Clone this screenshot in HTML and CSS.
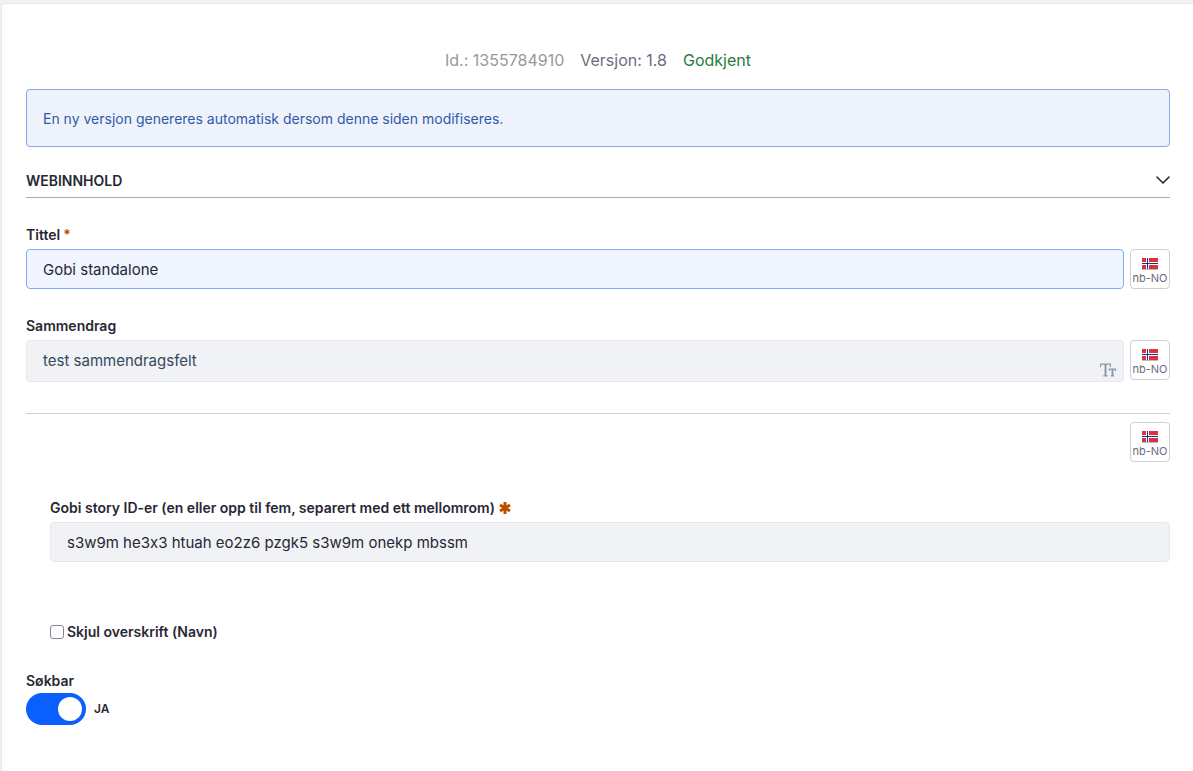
FILE: index.html
```html
<!DOCTYPE html>
<html lang="nb">
<head>
    <title>Webinnhold</title>
    <meta charset="utf-8" />
    <meta name="viewport" content="width=device-width, initial-scale=1" />

    <link rel="stylesheet" href="styles.css">

</head>
<body>

    <!-- Norwegian flag, used by all the language buttons -->
    <svg class="symbols" width="0" height="0" aria-hidden="true">
        <symbol id="flag-no" viewBox="0 0 16 12">
            <rect width="16" height="12" fill="#fff" />
            <path fill="#e03038" d="M0 0h4v4H0zM7 0h9v4H7zM0 7h4v4H0zM7 7h9v4H7z" />
            <path fill="#10359c" d="M5 0h1v11H5zM0 5h16v1H0z" />
            <path fill="#b9b9c4" d="M0 11h16v1H0z" />
        </symbol>
    </svg>

    <form class="sheet">

        <div class="meta">
            <span class="meta_id">Id.: 1355784910</span>
            <span class="meta_version">Versjon: 1.8</span>
            <span class="meta_status">Godkjent</span>
        </div>

        <div class="alert">En ny versjon genereres automatisk dersom denne siden modifiseres.</div>

        <button type="button" class="panel_header">
            <span>WEBINNHOLD</span>
            <svg class="chevron" viewBox="0 0 14 10"><path d="M1 1l6 6 6-6" /></svg>
        </button>

        <div class="field">
            <label for="title">Tittel<span class="required">*</span></label>
            <div class="field_row">
                <input type="text" id="title" class="input input_active" value="Gobi standalone" />
                <button type="button" class="lang"><svg class="flag"><use href="#flag-no" /></svg>nb-NO</button>
            </div>
        </div>

        <div class="field">
            <label for="summary">Sammendrag</label>
            <div class="field_row">
                <div class="editor">
                    <textarea id="summary" class="input input_summary" rows="1">test sammendragsfelt</textarea>
                    <svg class="text_icon" viewBox="0 0 16 14">
                        <path d="M.6 4V1.200h9.800V4M3.300 12.900h4.400" />
                        <path class="stem" d="M5.500 1v12M12.500 6v7" />
                        <path d="M9.400 7.900V6.200h6V7.900M10.900 12.900h3.200" />
                    </svg>
                </div>
                <button type="button" class="lang"><svg class="flag"><use href="#flag-no" /></svg>nb-NO</button>
            </div>
        </div>

        <div class="structure">
            <button type="button" class="lang"><svg class="flag"><use href="#flag-no" /></svg>nb-NO</button>
        </div>

        <div class="nested">
            <div class="field">
                <label for="stories">Gobi story ID-er (en eller opp til fem, separert med ett mellomrom)
                    <svg class="asterisk" viewBox="0 0 12 12"><path d="M6 0v12M1 3l10 6M11 3L1 9" /></svg>
                </label>
                <input type="text" id="stories" class="input" value="s3w9m he3x3 htuah eo2z6 pzgk5 s3w9m onekp mbssm" />
            </div>

            <div class="check">
                <input type="checkbox" id="hide-title" class="checkbox" />
                <label for="hide-title">Skjul overskrift (Navn)</label>
            </div>
        </div>

        <div class="searchable">
            <label for="searchable">Søkbar</label>
            <div class="toggle_row">
                <input type="checkbox" id="searchable" class="toggle" checked />
                <span>JA</span>
            </div>
        </div>

    </form>

</body>
</html>
```

FILE: styles.css
```css
* {
    box-sizing: border-box;
}

body {
    margin: 0;
    padding: 3px 0 0 1px;
    background: #f1f2f5;
    color: #272833;
    font-family: Inter, "Liberation Sans", sans-serif;
    font-size: 16px;
    line-height: 24px;
    font-variant-ligatures: no-contextual;
}

button,
input,
textarea {
    margin: 0;
    font-family: inherit;
    font-variant-ligatures: inherit;
    color: inherit;
}

label {
    display: block;
    font-size: 14px;
    font-weight: 600;
    line-height: 20px;
}

.symbols {
    position: absolute;
}

.sheet {
    min-height: calc(100vh - 3px);
    padding: 44px 23px 46px 24px;
    border: 1px solid #e7e7ed;
    border-width: 1px 0 0 1px;
    border-radius: 4px 0 0 0;
    background: #fff;
}

.meta {
    display: flex;
    justify-content: center;
    gap: 16px;
    margin-bottom: 17px;
}

.meta_id {
    color: #999;
}

.meta_version {
    color: #6b6c7e;
}

.meta_status {
    color: #287d3c;
}

.alert {
    padding: 19px 16px 17px;
    border: 1px solid #89a7e0;
    border-radius: 4px;
    background: #eef2fa;
    color: #2e5aac;
    font-size: 14px;
    line-height: 20px;
}

/* section header */
.panel_header {
    display: flex;
    justify-content: space-between;
    align-items: center;
    width: 100%;
    margin: 24px 0 27px;
    padding: 0 0 6px;
    border: 0;
    border-bottom: 1px solid #a7a9bc;
    background: none;
    font-size: 14px;
    font-weight: 600;
    line-height: 20px;
}

.chevron {
    width: 14px;
    height: 10px;
    overflow: visible;
    fill: none;
    stroke: #272833;
    stroke-width: 1.600;
    stroke-linecap: round;
    stroke-linejoin: round;
}

/* fields */
.field {
    margin-bottom: 27px;
}

.field label {
    margin-bottom: 4px;
}

.field_row {
    display: flex;
    align-items: flex-start;
    gap: 6px;
}

.input {
    display: block;
    flex: 1;
    width: 100%;
    height: 40px;
    padding: 7px 16px;
    border: 1px solid #e7e7ed;
    border-radius: 4px;
    background: #f1f2f5;
    font-size: 15px;
    line-height: 24px;
}

.input_active {
    border-color: #80acff;
    background: #f0f5ff;
}

.editor {
    position: relative;
    flex: 1;
}

.input_summary {
    height: 42px;
    padding: 8px 16px;
    overflow: hidden;
    resize: none;
    color: #34495e;
}

.text_icon {
    position: absolute;
    right: 8px;
    bottom: 5px;
    width: 16px;
    height: 14px;
    fill: none;
    stroke: #869cad;
    stroke-width: 1.200;
}

.stem {
    stroke-width: 2;
}

.required {
    margin-left: 3px;
    color: #b95000;
}

.asterisk {
    width: 12px;
    height: 12px;
    margin-left: 1px;
    vertical-align: -1px;
    stroke: #b95000;
    stroke-width: 3;
}

.lang {
    display: flex;
    flex-direction: column;
    align-items: center;
    width: 40px;
    height: 40px;
    padding: 8px 0 0;
    border: 1px solid #cdced9;
    border-radius: 4px;
    background: #fff;
    color: #6b6c7e;
    font-size: 11px;
    line-height: 16px;
}

.flag {
    flex: none;
    width: 16px;
    height: 12px;
}

.structure {
    display: flex;
    justify-content: flex-end;
    margin-top: 31px;
    padding-top: 8px;
    border-top: 1px solid #cdced9;
}

.nested {
    padding: 36px 0 0 24px;
}

.check {
    display: flex;
    align-items: center;
    gap: 3px;
    margin-top: 60px;
}

.checkbox {
    appearance: none;
    width: 14px;
    height: 14px;
    border: 1px solid #85869a;
    border-radius: 3px;
    background: #fff;
}

.checkbox:checked {
    background: #0b5fff;
}

/* searchable switch */
.searchable {
    margin-top: 29px;
}

.toggle_row {
    display: flex;
    align-items: center;
    gap: 8px;
    margin-top: 2px;
    font-size: 12px;
    font-weight: 600;
}

.toggle {
    appearance: none;
    display: flex;
    align-items: center;
    width: 60px;
    height: 32px;
    padding: 0 4px;
    border-radius: 16px;
    background: #a7a9bc;
}

.toggle::before {
    content: "";
    width: 24px;
    height: 24px;
    border-radius: 50%;
    background: #fff;
}

.toggle:checked {
    justify-content: flex-end;
    background: #0b5fff;
}
```
